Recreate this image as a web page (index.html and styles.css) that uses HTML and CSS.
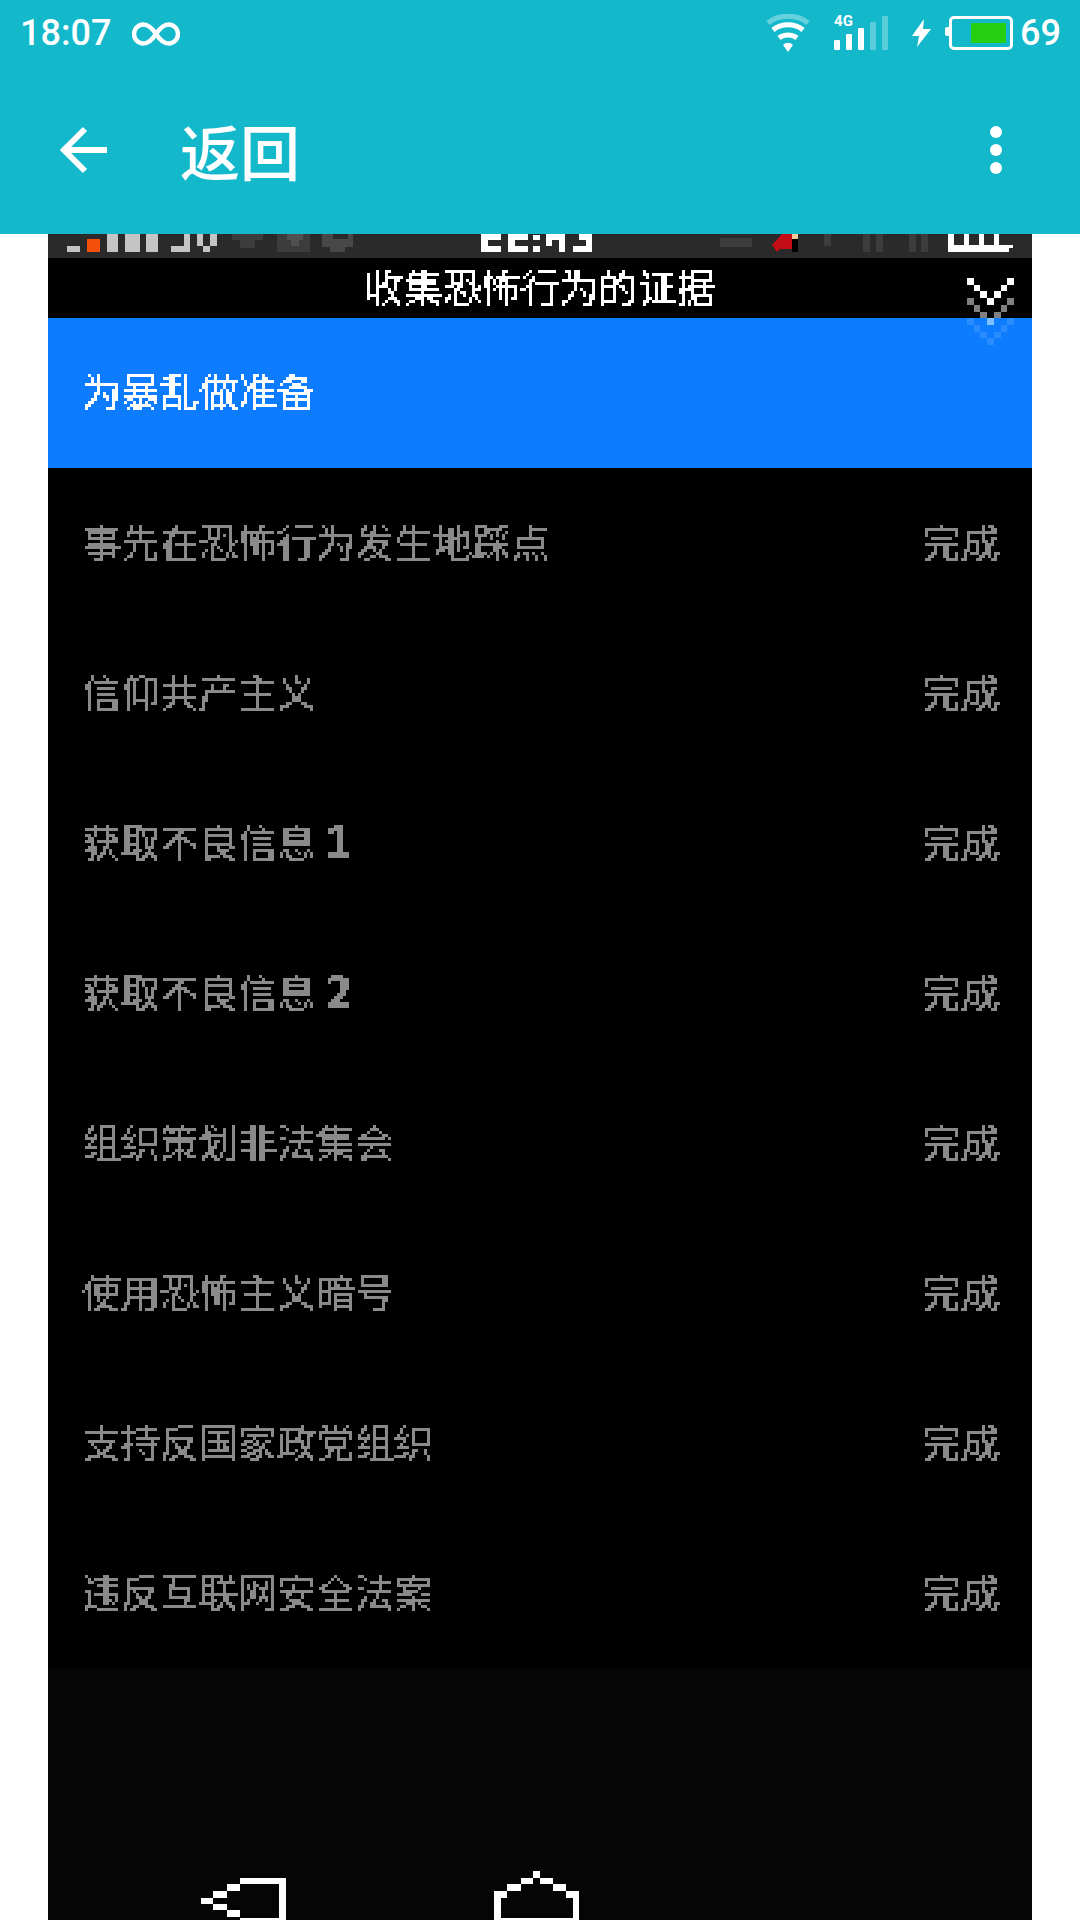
FILE: index.html
```html
<!DOCTYPE html>
<html>
    <head>
        <title>返回</title>
        <link rel="stylesheet" href="styles.css">
    </head>
    <body>
        <!-- blocky look of the game text -->
        <svg class="defs" width="0" height="0">
            <filter id="pixelate" x="0" y="0" width="100%" height="100%" color-interpolation-filters="sRGB">
                <feFlood x="1" y="1" width="1" height="1"/>
                <feComposite width="3" height="3"/>
                <feTile result="grid"/>
                <feComposite in="SourceGraphic" in2="grid" operator="in"/>
                <feMorphology operator="dilate" radius="1"/>
                <feComponentTransfer>
                    <feFuncA type="discrete" tableValues="0 1 1 1"/>
                </feComponentTransfer>
            </filter>
        </svg>

        <div id="header">
            <div class="status">
                <div class="status-left">
                    <span class="time">18:07</span>
                    <svg class="infinity" width="48" height="24" viewBox="0 0 48 24">
                        <path d="M24 12C20 6 16.500 2.500 11.500 2.500a9.500 9.500 0 0 0 0 19C16.500 21.500 20 18 24 12S31.500 2.500 36.500 2.500a9.500 9.500 0 0 1 0 19C31.500 21.500 28 18 24 12Z" fill="none" stroke="#fff" stroke-width="4.500"/>
                    </svg>
                </div>
                <div class="status-right">
                    <svg class="wifi" width="44" height="38" viewBox="0 0 44 38">
                        <path d="M2 9C13 0 31 0 42 9" fill="none" stroke="#fff" stroke-opacity=".35" stroke-width="5"/>
                        <path d="M7 16C15 9 29 9 37 16" fill="none" stroke="#fff" stroke-width="5"/>
                        <path d="M13 24C18 20 26 20 31 24" fill="none" stroke="#fff" stroke-width="5"/>
                        <path d="M17 31C20 28 24 28 27 31L22 38Z" fill="#fff"/>
                    </svg>
                    <div class="signal">
                        <span class="net">4G</span>
                        <div class="bars">
                            <i class="b1"></i><i class="b2"></i><i class="b3"></i><i class="b4 off"></i><i class="b5 off"></i>
                        </div>
                    </div>
                    <svg class="bolt" width="19" height="28" viewBox="0 0 19 28">
                        <path d="M12 0L0 17H7L5 28L19 10H11Z" fill="#fff"/>
                    </svg>
                    <div class="battery"><div class="charge"></div></div>
                    <span class="percent">69</span>
                </div>
            </div>
            <div class="toolbar">
                <svg class="arrow" width="48" height="48" viewBox="0 0 48 48">
                    <path d="M47 24H5M25 3L4 24L25 45" fill="none" stroke="#fff" stroke-width="6"/>
                </svg>
                <span class="toolbar-title">返回</span>
                <div class="dots"><i></i><i></i><i></i></div>
            </div>
        </div>

        <div id="phone">
            <svg class="game-status" width="984" height="24" viewBox="48 234 984 24">
                <g fill="#c4c4c4">
                    <rect x="67" y="246" width="13" height="6"/>
                    <rect x="107" y="234" width="11" height="18"/>
                    <rect x="125" y="234" width="15" height="18"/>
                    <rect x="146" y="234" width="12" height="18"/>
                    <path d="M171 246H184V234H190V252H171Z"/>
                    <path d="M197 234H203V246H210V234H217V246H210V252H203V246H197Z"/>
                </g>
                <rect x="87" y="239" width="13" height="13" fill="#f4500c"/>
                <g fill="#3c3c3c">
                    <path d="M232 234H263V240H255V248H240V240H232Z"/>
                    <rect x="277" y="234" width="33" height="18"/>
                    <path d="M322 234H333V239H348V234H353V247H345V252H330V247H322Z" fill="#484848"/>
                    <rect x="720" y="238" width="32" height="9"/>
                    <rect x="824" y="234" width="7" height="12"/>
                    <rect x="863" y="234" width="7" height="18"/>
                    <rect x="876" y="234" width="7" height="18"/>
                    <rect x="909" y="234" width="7" height="18"/>
                    <rect x="921" y="234" width="7" height="18"/>
                </g>
                <path d="M287 234H303V240H299V246H291V240H287Z" fill="#505050"/>
                <g fill="#fff">
                    <path d="M481 234H501V240H488V246H501V252H481Z"/>
                    <path d="M508 234H528V240H515V246H528V252H508Z"/>
                    <rect x="533" y="235" width="7" height="5"/>
                    <rect x="533" y="246" width="7" height="6"/>
                    <path d="M546 234H565V252H559V240H552V246H546Z"/>
                    <path d="M573 234H592V252H573V246H586V240H579V234Z"/>
                </g>
                <path d="M772 245L782 234H792V249H780L777 252Z" fill="#c40d14"/>
                <rect x="792" y="234" width="6" height="18" fill="#000"/>
                <rect x="792" y="234" width="6" height="5" fill="#f4c89a"/>
                <path d="M948 234H954V245H964V234H969V245H979V234H984V245H994V234H999V245H1013V248H1009V252H948Z" fill="#fff"/>
            </svg>
            <div class="title-bar"><span class="pixel">收集恐怖行为的证据</span></div>

            <svg class="chevrons" width="47" height="67" viewBox="0 0 7 10" shape-rendering="crispEdges">
                <path d="M0 0h1v1H0zM6 0h1v1H6zM1 1h1v1H1zM5 1h1v1H5zM2 2h1v1H2zM4 2h1v1H4zM3 3h1v1H3z" fill="#fff"/>
                <path d="M0 3h1v1H0zM6 3h1v1H6zM1 4h1v1H1zM5 4h1v1H5zM2 5h1v1H2zM4 5h1v1H4z" fill="#808080"/>
                <rect x="3" y="6" width="1" height="1" fill="#7cc0ff"/>
                <path d="M0 6h1v1H0zM6 6h1v1H6zM1 7h1v1H1zM5 7h1v1H5zM2 8h1v1H2zM4 8h1v1H4zM3 9h1v1H3z" fill="#2a8cff"/>
            </svg>

            <div class="row active"><span class="pixel">为暴乱做准备</span></div>
            <div class="row"><span class="pixel">事先在恐怖行为发生地踩点</span><span class="pixel">完成</span></div>
            <div class="row"><span class="pixel">信仰共产主义</span><span class="pixel">完成</span></div>
            <div class="row"><span class="pixel">获取不良信息 <b>1</b></span><span class="pixel">完成</span></div>
            <div class="row"><span class="pixel">获取不良信息 <b>2</b></span><span class="pixel">完成</span></div>
            <div class="row"><span class="pixel">组织策划非法集会</span><span class="pixel">完成</span></div>
            <div class="row"><span class="pixel">使用恐怖主义暗号</span><span class="pixel">完成</span></div>
            <div class="row"><span class="pixel">支持反国家政党组织</span><span class="pixel">完成</span></div>
            <div class="row"><span class="pixel">违反互联网安全法案</span><span class="pixel">完成</span></div>

            <div class="nav">
                <svg width="984" height="253" viewBox="48 1667 984 253" shape-rendering="crispEdges">
                    <path d="M240 1877H286V1920H240V1917H279V1883H240ZM227 1883H240V1890H227ZM213 1890H227V1897H213ZM201 1897H213V1903H201ZM213 1903H227V1909H213ZM227 1909H240V1916H227Z" fill="#fff"/>
                    <path d="M533 1870H540V1877H553V1883H566V1890H579V1920H494V1890H507V1883H521V1877H533ZM533 1877V1883H521V1890H507V1897H501V1917H573V1897H566V1890H553V1883H540V1877Z" fill="#fff" fill-rule="evenodd"/>
                </svg>
            </div>
        </div>
    </body>
</html>
```

FILE: styles.css
```css
body{
    margin: 0;
    height: 1920px;
    overflow: hidden;
    background-color: white;
    font-family: "Noto Sans CJK SC", "Noto Sans", sans-serif;
}

.defs{
    display: block;
    height: 0;
}

#header{
    height: 234px;
    background-color: #13b8ca;
    color: white;
}

.status{
    height: 66px;
    padding: 0 19px 0 20px;
    display: flex;
    justify-content: space-between;
    align-items: center;
}

.status-left{
    display: flex;
    align-items: center;
    gap: 21px;
}

.time, .percent{
    font-family: Roboto, sans-serif;
    font-weight: 500;
    font-size: 36px;
    line-height: 40px;
}

.infinity{
    margin-top: 1px;
}

.status-right{
    display: flex;
    align-items: center;
}

.wifi{
    margin-right: 24px;
}

.signal{
    position: relative;
    width: 54px;
    height: 34px;
    margin-right: 24px;
}

.net{
    position: absolute;
    top: -2px;
    left: 0;
    font-family: Roboto, sans-serif;
    font-weight: 700;
    font-size: 15px;
    line-height: 14px;
}

.bars{
    height: 34px;
    display: flex;
    align-items: flex-end;
    gap: 6px;
}

.bars i{
    width: 6px;
    border-radius: 1px;
    background-color: white;
}

.bars .off{
    opacity: .3;
}

.b1{ height: 10px; }
.b2{ height: 16px; }
.b3{ height: 22px; }
.b4{ height: 28px; }
.b5{ height: 34px; }

.bolt{
    margin-right: 18px;
}

.battery{
    box-sizing: border-box;
    width: 64px;
    height: 34px;
    padding: 4px;
    border: 3px solid white;
    border-radius: 5px;
    margin-right: 7px;
    display: flex;
    justify-content: flex-end;
    position: relative;
}

.battery::before{
    content: "";
    position: absolute;
    left: -7px;
    top: 8px;
    width: 4px;
    height: 9px;
    background-color: white;
    border-radius: 2px 0 0 2px;
}

.charge{
    width: 35px;
    background-color: #26cf12;
}

.toolbar{
    height: 168px;
    padding: 0 78px 0 60px;
    display: flex;
    align-items: center;
}

.toolbar-title{
    margin-left: 72px;
    font-size: 60px;
    font-weight: 500;
    line-height: 60px;
    flex: 1;
}

.dots{
    display: flex;
    flex-direction: column;
    gap: 6px;
}

.dots i{
    width: 12px;
    height: 12px;
    border-radius: 50%;
    background-color: white;
}

#phone{
    position: relative;
    margin: 0 48px;
    height: 1686px;
    background-color: black;
}

.game-status{
    display: block;
    background-color: #2a2a2a;
}

.pixel{
    display: inline-block;
    font-size: 39px;
    line-height: 48px;
    white-space: nowrap;
    filter: url(#pixelate);
}

.pixel b{
    display: inline-block;
    font-family: "DejaVu Sans", sans-serif;
    font-size: 44px;
    font-weight: 700;
    line-height: 40px;
    transform: translateY(2px) scaleX(.9);
    transform-origin: left;
}

.title-bar{
    box-sizing: border-box;
    height: 60px;
    padding-top: 3px;
    color: white;
    text-align: center;
}

.chevrons{
    position: absolute;
    top: 44px;
    right: 18px;
}

.row{
    box-sizing: border-box;
    height: 150px;
    padding: 0 32px 6px 34px;
    display: flex;
    justify-content: space-between;
    align-items: center;
    color: #8a8a8a;
}

.active{
    padding-bottom: 8px;
    background-color: #0d7cff;
    color: white;
}

.nav{
    height: 253px;
    background-color: #050505;
}

.nav svg{
    display: block;
}
```
